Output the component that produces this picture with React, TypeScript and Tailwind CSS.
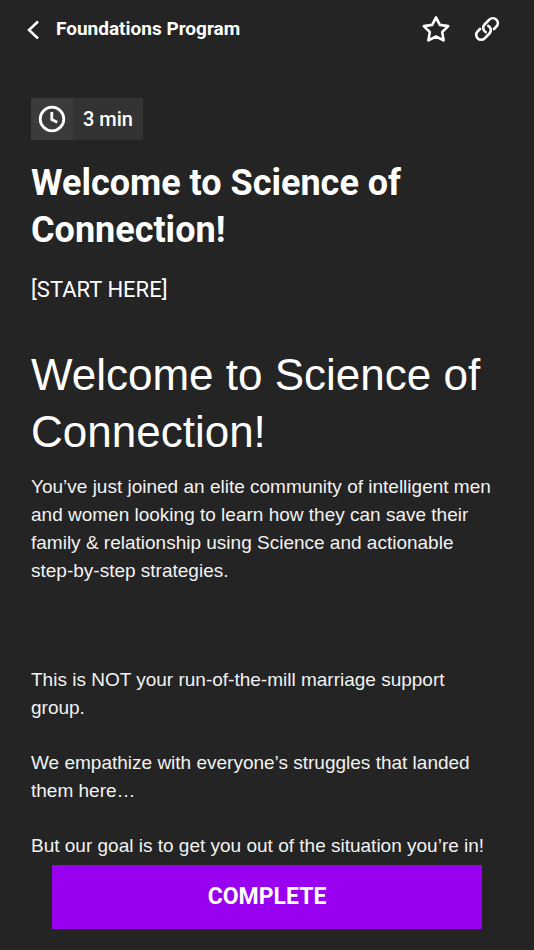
import React from "react";

const iconProps = {
  fill: "none",
  stroke: "currentColor",
  strokeLinecap: "round" as const,
  strokeLinejoin: "round" as const,
  "aria-hidden": true,
};

function Header() {
  return (
    <header className="flex h-[58px] items-center justify-between pr-[33px] pl-6 font-['Roboto',sans-serif]">
      <div className="flex items-center gap-3">
        <button type="button" aria-label="Back">
          <svg {...iconProps} strokeLinecap="butt" strokeLinejoin="miter" viewBox="0 0 20 20" strokeWidth="2.5" className="size-5">
            <path d="M14 2.5 5 11l9 8.5" />
          </svg>
        </button>
        <span className="text-[19px] leading-6 font-bold">Foundations Program</span>
      </div>
      <div className="flex items-center gap-[21px]">
        <button type="button" aria-label="Favorite">
          <svg {...iconProps} viewBox="0 0 32 32" strokeWidth="2.6" className="size-8">
            <path d="M16 4.4 19.8 11.9 28.2 13.1 22.2 19 23.6 27.4 16 23.5 8.4 27.4 9.8 19 3.8 13.1 12.2 11.9Z" />
          </svg>
        </button>
        <button type="button" aria-label="Copy link">
          <svg {...iconProps} viewBox="0 0 24 24" strokeWidth="2.3" className="size-7">
            <path d="M13.1 9.3a4.2 4.2 0 0 1 1 6.6l-4.1 4.1a4.2 4.2 0 0 1-6-6l2-2M18 12l2-2a4.2 4.2 0 0 0-6-6L9.9 8.1a4.2 4.2 0 0 0 1 6.6" />
          </svg>
        </button>
      </div>
    </header>
  );
}

function Duration() {
  return (
    <div className="flex h-[42px] w-fit bg-[#333333] font-['Roboto',sans-serif]">
      <div className="flex w-[42px] items-center justify-center bg-[#3b3b3b]">
        <svg {...iconProps} strokeLinecap="butt" strokeLinejoin="miter" viewBox="0 0 28 28" strokeWidth="2.8" className="size-7">
          <circle cx="14" cy="14" r="11.8" />
          <path d="M13.8 7v7.6l5.4 2.7" />
        </svg>
      </div>
      <span className="self-center px-[10px] text-xl font-medium">3 min</span>
    </div>
  );
}

export default function App() {
  return (
    <div className="min-h-screen bg-[#242424] text-white">
      <Header />
      <main className="pt-10 pr-[35px] pb-24 pl-[31px]">
        <Duration />
        <h1 className="mt-5 font-['Roboto',sans-serif] text-4xl leading-[47px] font-bold">
          Welcome to Science of Connection!
        </h1>
        <p className="mt-5 font-['Roboto',sans-serif] text-[22px] leading-8">[START HERE]</p>
        <article className="mt-10 font-['Liberation_Sans',Arial,sans-serif] text-[19px] leading-7 text-[#f2f2f2]">
          <h2 className="text-[44px] leading-[57px] text-white">Welcome to Science of Connection!</h2>
          <p className="mt-[13px]">
            You’ve just joined an elite community of intelligent men and women looking to learn how they can save their
            family &amp; relationship using Science and actionable{" "}
            <span className="whitespace-nowrap">step-by-step</span> strategies.
          </p>
          <p className="mt-[81px]">This is NOT your run-of-the-mill marriage support group.</p>
          <p className="mt-[27px]">We empathize with everyone’s struggles that landed them here…</p>
          <p className="mt-[27px]">But our goal is to get you out of the situation you’re in!</p>
        </article>
      </main>
      <footer className="fixed inset-x-0 bottom-0 bg-[#242424] px-[52px] pb-[21px] font-['Roboto',sans-serif]">
        <button type="button" className="h-16 w-full bg-[#9900f0] text-[23px] font-bold">
          COMPLETE
        </button>
      </footer>
    </div>
  );
}
